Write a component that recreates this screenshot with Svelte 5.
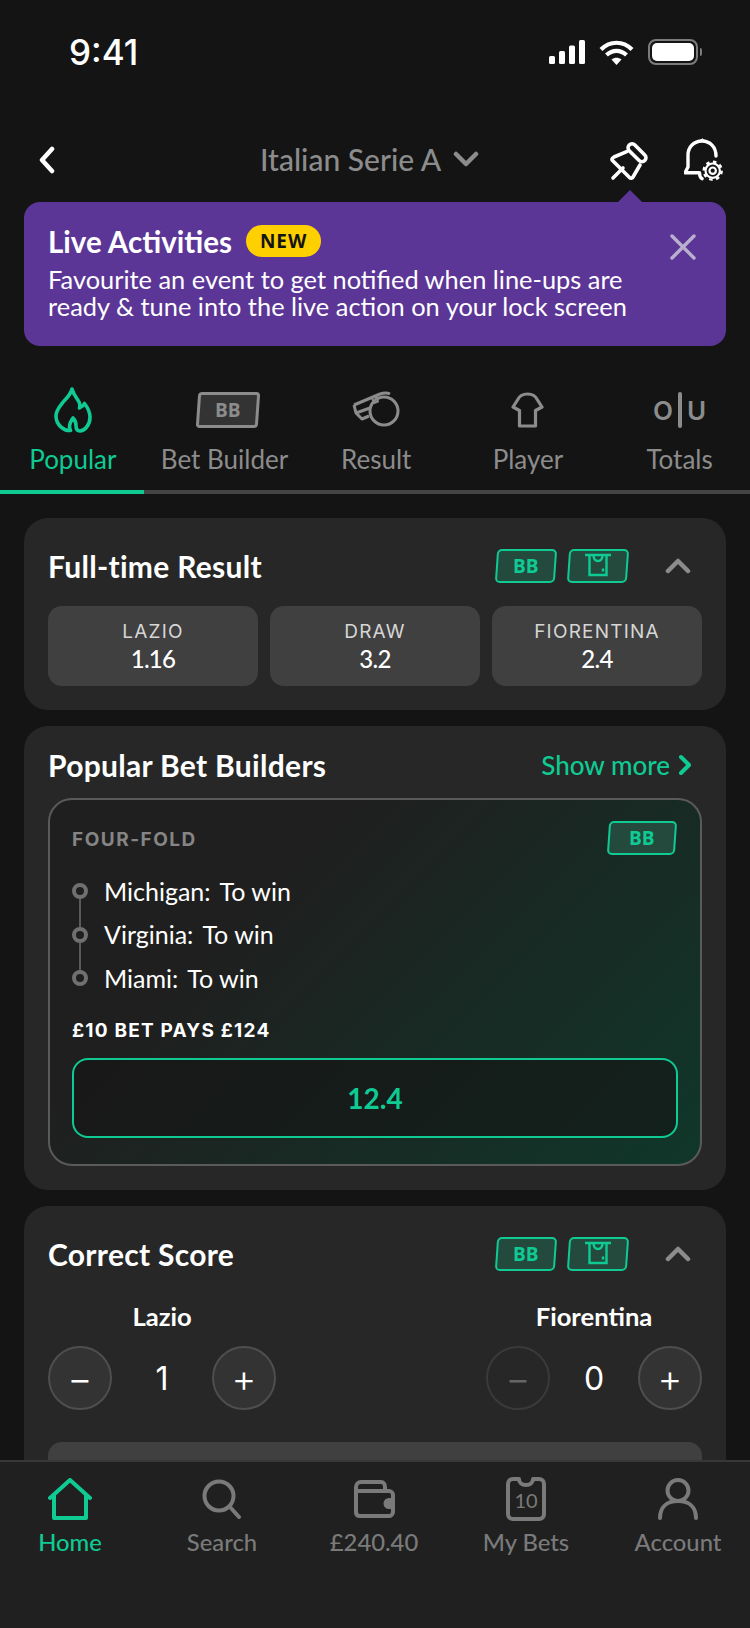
<script>
  const tabs = [
    { id: "popular", label: "Popular", active: true },
    { id: "bb", label: "Bet Builder" },
    { id: "result", label: "Result" },
    { id: "player", label: "Player" },
    { id: "totals", label: "Totals" },
  ];
  const odds = [
    { name: "LAZIO", price: "1.16" },
    { name: "DRAW", price: "3.2" },
    { name: "FIORENTINA", price: "2.4" },
  ];
  const legs = [
    { team: "Michigan:", pick: "To win" },
    { team: "Virginia:", pick: "To win" },
    { team: "Miami:", pick: "To win" },
  ];
  const nav = [
    { id: "home", label: "Home", active: true },
    { id: "search", label: "Search" },
    { id: "wallet", label: "£240.40" },
    { id: "bets", label: "My Bets" },
    { id: "account", label: "Account" },
  ];
</script>

{#snippet badges()}
  <div class="badges">
    <span class="badge"><span class="upright">BB</span></span>
    <span class="badge">
      <svg class="upright" width="28" height="26" viewBox="0 0 28 26" fill="none" stroke="#0fcb93" stroke-width="2.4">
        <path d="M1 2h26M5.5 2v20h17V2M9.5 2c0 4 1.8 6 4.5 6s4.5-2 4.5-6M19 15.5v3" />
      </svg>
    </span>
    <svg class="collapse" width="26" height="16" viewBox="0 0 26 16" fill="none" stroke="#8c8c8c" stroke-width="4.5" stroke-linecap="round" stroke-linejoin="round">
      <path d="M3 13l10-10 10 10" />
    </svg>
  </div>
{/snippet}

<div class="phone">
  <div class="status">
    <span class="time">9:41</span>
    <div class="status-icons">
      <svg width="36" height="24" viewBox="0 0 36 24" fill="#fff">
        <rect x="0" y="16" width="6" height="8" rx="1.5" />
        <rect x="10" y="11" width="6" height="13" rx="1.5" />
        <rect x="20" y="5.5" width="6" height="18.5" rx="1.5" />
        <rect x="30" y="0" width="6" height="24" rx="1.5" />
      </svg>
      <svg width="35" height="25" viewBox="0 0 35 25" fill="none" stroke="#fff" stroke-width="4.2">
        <path d="M2 9.5c9-9 22-9 31 0M7.5 15c6-5.5 14-5.5 20 0" />
        <path d="M12.5 19.5c3-2.5 7-2.5 10 0L17.5 25z" fill="#fff" stroke="none" />
      </svg>
      <div class="battery"><div class="battery-fill"></div></div>
      <div class="battery-cap"></div>
    </div>
  </div>

  <header class="topbar">
    <svg class="back" width="18" height="28" viewBox="0 0 18 28" fill="none" stroke="#fff" stroke-width="4.5" stroke-linecap="round" stroke-linejoin="round">
      <path d="M14 3L4 14l10 11" />
    </svg>
    <div class="league">
      <span>Italian Serie A</span>
      <svg width="26" height="16" viewBox="0 0 26 16" fill="none" stroke="#8c8c8c" stroke-width="4.5" stroke-linecap="round" stroke-linejoin="round">
        <path d="M3 3l10 10 10-10" />
      </svg>
    </div>
    <div class="top-actions">
      <svg width="44" height="44" viewBox="0 0 44 44" fill="none" stroke="#fff" stroke-width="3.6" stroke-linecap="round" stroke-linejoin="round">
        <rect x="16" y="10.8" width="22" height="8" rx="4" transform="rotate(45 27 14.8)" />
        <path d="M16.7 13.7L4 19c-2 1-2.5 2.5-1.5 3.5L19.5 39.5c1 1 3 .8 3.5-.5L30 27" />
        <path d="M3 40l10-10" />
      </svg>
      <svg width="40" height="44" viewBox="0 0 40 44" fill="none" stroke="#fff" stroke-width="3.4" stroke-linecap="round" stroke-linejoin="round">
        <path d="M32 18C32 9 26 3 18 3S4 9 4 17v12L1 34.7h14.5c0 3 1 5 2.5 6" />
        <path d="M18 1l-3 2.5h6z" fill="#fff" stroke-width="1" />
        <circle cx="28.7" cy="32.7" r="3.2" stroke-width="2.2" />
        <circle cx="28.7" cy="32.7" r="7.2" stroke-width="2.2" />
        <circle cx="28.7" cy="32.7" r="9" stroke-width="2.4" stroke-linecap="butt" stroke-dasharray="3.5 3.57" />
      </svg>
    </div>
  </header>

  <section class="banner">
    <div class="banner-text">
      <div class="banner-head">
        <h2>Live Activities</h2>
        <span class="new">NEW</span>
      </div>
      <p>Favourite an event to get notified when line-ups are<br />ready &amp; tune into the live action on your lock screen</p>
    </div>
    <svg class="close" width="26" height="26" viewBox="0 0 26 26" stroke="#b9afcf" stroke-width="3.4" stroke-linecap="round">
      <path d="M2 2l22 22M24 2L2 24" />
    </svg>
  </section>

  <nav class="tabs">
    {#each tabs as tab}
      <div class="tab" class:active={tab.active}>
        <div class="tab-icon">
          {#if tab.id === "popular"}
            <svg width="38" height="46" viewBox="0 0 38 46" fill="none" stroke="#0fcb93" stroke-width="3.6" stroke-linejoin="round">
              <path d="M18 2c2 7 5 9 7 13 1 2 1 4 .5 6 2-1 4-2.5 5-4.5 4 5 5.5 9.5 5.5 14 0 8-6 13.5-10 13.5-2.5 0-4-2-4-5.5 0-3-1-5.5-3-7.5-1.5 2.5-3.5 4.5-3.5 8 0 2 .5 3.5 1 4.5C10 44 2 38 2 29c0-6 4-10 8-15 4-4 7-8 8-12z" />
            </svg>
          {:else if tab.id === "bb"}
            <span class="bb-tab"><span class="upright">BB</span></span>
          {:else if tab.id === "result"}
            <svg width="48" height="38" viewBox="0 0 48 38" fill="none" stroke="#8c8c8c" stroke-width="3" stroke-linejoin="round">
              <path d="M2 14L28 3c3-1 7-1.5 10 0" />
              <path d="M2 14l2 8 6 6 7-3" />
              <path d="M4 22l14-5" />
              <path d="M20 7l2 5 4-1.5-1.5-5z" stroke-width="2" />
              <circle cx="32" cy="20" r="14" />
            </svg>
          {:else if tab.id === "player"}
            <svg width="33" height="36" viewBox="0 0 33 36" fill="none" stroke="#8c8c8c" stroke-width="3.2" stroke-linejoin="round" stroke-linecap="round">
              <path d="M16.5 2c-4 0-8 1.5-10 6L2 15l6.5 3.5V34h16V18.5L31 15l-4.5-7c-2-4.5-6-6-10-6z" />
            </svg>
          {:else}
            <div class="ou"><span>O</span><i></i><span>U</span></div>
          {/if}
        </div>
        <span class="tab-label">{tab.label}</span>
      </div>
    {/each}
  </nav>

  <main class="content">
    <section class="card">
      <div class="card-head">
        <h3>Full-time Result</h3>
        {@render badges()}
      </div>
      <div class="odds">
        {#each odds as o}
          <div class="odd">
            <span class="odd-name">{o.name}</span>
            <span class="odd-price">{o.price}</span>
          </div>
        {/each}
      </div>
    </section>

    <section class="card builders">
      <div class="builders-head">
        <h3>Popular Bet Builders</h3>
        <div class="more">
          <span>Show more</span>
          <svg width="14" height="22" viewBox="0 0 14 22" fill="none" stroke="#0fcb93" stroke-width="4" stroke-linecap="round" stroke-linejoin="round">
            <path d="M3 3l8 8-8 8" />
          </svg>
        </div>
      </div>
      <div class="builder">
        <div class="builder-top">
          <span class="fold">FOUR-FOLD</span>
          <span class="badge"><span class="upright">BB</span></span>
        </div>
        <ul class="legs">
          {#each legs as leg}
            <li><span>{leg.team}</span><span>{leg.pick}</span></li>
          {/each}
        </ul>
        <div class="pays">£10 BET PAYS £124</div>
        <div class="builder-price">12.4</div>
      </div>
    </section>

    <section class="card score">
      <div class="card-head">
        <h3>Correct Score</h3>
        {@render badges()}
      </div>
      <div class="steppers">
        <div class="team">
          <span class="team-name">Lazio</span>
          <div class="stepper">
            <span class="round">−</span>
            <span class="value wide">1</span>
            <span class="round">+</span>
          </div>
        </div>
        <div class="team">
          <span class="team-name">Fiorentina</span>
          <div class="stepper">
            <span class="round off">−</span>
            <span class="value">0</span>
            <span class="round">+</span>
          </div>
        </div>
      </div>
      <div class="score-btn"></div>
    </section>
  </main>

  <footer class="bottom">
    {#each nav as item}
      <div class="nav-item" class:active={item.active}>
        <div class="nav-icon">
          {#if item.id === "home"}
            <svg width="46" height="42" viewBox="0 0 46 42" fill="none" stroke="#0fcb93" stroke-width="4" stroke-linecap="round" stroke-linejoin="round">
              <path d="M3 20L23 2l20 18M7 17v23h32V17" />
            </svg>
          {:else if item.id === "search"}
            <svg width="40" height="40" viewBox="0 0 40 40" fill="none" stroke="#7a7a7a" stroke-width="4" stroke-linecap="round">
              <circle cx="17" cy="17" r="14.5" />
              <path d="M28 28l9 10" />
            </svg>
          {:else if item.id === "wallet"}
            <svg width="42" height="38" viewBox="0 0 42 38" fill="none" stroke="#7a7a7a" stroke-width="4" stroke-linejoin="round">
              <path d="M3 12V7c0-2.5 2-5 5-5h20c2.5 0 4 2 4 5v4" />
              <path d="M3 11h33c2 0 4 2 4 4v17c0 2-2 4-4 4H7c-3 0-4-2-4-4z" />
              <path d="M40 20h-4c-2 0-3.5 1.5-3.5 3.5S34 27 36 27h4z" fill="#7a7a7a" />
            </svg>
          {:else if item.id === "bets"}
            <svg width="40" height="44" viewBox="0 0 40 44" fill="none" stroke="#7a7a7a" stroke-width="4" stroke-linejoin="round">
              <path d="M13 2c0 4 3 6 7 6s7-2 7-6h6c3 0 5 2 5 5v30c0 3-2 5-5 5H7c-3 0-5-2-5-5V7c0-3 2-5 5-5z" />
              <text x="20" y="31" text-anchor="middle" fill="#7a7a7a" stroke="none" font-size="20" font-family="Lato, sans-serif">10</text>
            </svg>
          {:else}
            <svg width="42" height="42" viewBox="0 0 42 42" fill="none" stroke="#7a7a7a" stroke-width="4" stroke-linecap="round">
              <ellipse cx="21" cy="12.5" rx="10.5" ry="10.5" />
              <path d="M3 40c0-11 7-17 18-17s18 6 18 17" />
            </svg>
          {/if}
        </div>
        <span class="nav-label">{item.label}</span>
      </div>
    {/each}
  </footer>
</div>

<style>
  :global(body) {
    margin: 0;
    background: #141414;
  }

  .phone {
    width: 750px;
    height: 1628px;
    display: flex;
    flex-direction: column;
    overflow: hidden;
    background: #141414;
    color: #fff;
    font-family: Lato, "Open Sans", sans-serif;
  }

  h2, h3, p {
    margin: 0;
  }

  .status {
    height: 130px;
    flex-shrink: 0;
    box-sizing: border-box;
    padding: 32px 48px 0 69px;
    display: flex;
    justify-content: space-between;
    align-items: flex-start;
  }

  .time {
    font-family: Inter, sans-serif;
    font-size: 35px;
    font-weight: 500;
    line-height: 40px;
  }

  .status-icons {
    display: flex;
    align-items: center;
    height: 40px;
  }

  .status-icons svg {
    margin-right: 14px;
  }

  .battery {
    width: 50px;
    height: 26px;
    box-sizing: border-box;
    border: 2px solid #7c7c7c;
    border-radius: 8px;
    padding: 2px;
  }

  .battery-fill {
    height: 100%;
    background: #fff;
    border-radius: 5px;
  }

  .battery-cap {
    width: 2px;
    height: 8px;
    background: #7c7c7c;
    margin-left: 2px;
    border-radius: 0 2px 2px 0;
  }

  .topbar {
    height: 60px;
    flex-shrink: 0;
    box-sizing: border-box;
    padding: 0 26px 0 38px;
    display: flex;
    align-items: center;
    justify-content: space-between;
    position: relative;
  }

  .league {
    position: absolute;
    left: 260px;
    top: 11px;
    display: flex;
    align-items: center;
    gap: 12px;
    color: #8c8c8c;
    font-size: 30px;
    font-weight: 500;
  }

  .top-actions {
    display: flex;
    align-items: center;
    gap: 30px;
  }

  .banner {
    margin: 12px 24px 0;
    height: 144px;
    flex-shrink: 0;
    box-sizing: border-box;
    padding: 24px 30px 0 24px;
    background: #5c3696;
    border-radius: 16px;
    display: flex;
    justify-content: space-between;
    position: relative;
  }

  .banner::before {
    content: "";
    position: absolute;
    top: -12px;
    right: 84px;
    border-left: 12px solid transparent;
    border-right: 12px solid transparent;
    border-bottom: 12px solid #5c3696;
  }

  .banner-head {
    display: flex;
    align-items: center;
    gap: 14px;
    height: 30px;
  }

  .banner h2 {
    font-size: 29.5px;
    font-weight: 700;
  }

  .new {
    background: #ffd000;
    color: #141414;
    font-family: "Open Sans", sans-serif;
    font-size: 19px;
    font-weight: 700;
    letter-spacing: 1px;
    height: 32px;
    line-height: 32px;
    padding: 0 14px;
    border-radius: 16px;
  }

  .banner p {
    margin-top: 10px;
    font-size: 25.4px;
    line-height: 27px;
  }

  .close {
    margin-top: 8px;
  }

  .tabs {
    margin: 38px 0 0 -3px;
    width: 753px;
    flex-shrink: 0;
    display: grid;
    grid-template-columns: repeat(5, 151.7px);
    position: relative;
  }

  .tab {
    display: flex;
    flex-direction: column;
    align-items: center;
    height: 110px;
    color: #8c8c8c;
  }

  .tab.active {
    color: #0fcb93;
  }

  .tab-icon {
    height: 48px;
    padding-top: 2px;
    display: flex;
    align-items: center;
    justify-content: center;
  }

  .tab-label {
    margin-top: 10px;
    font-size: 26px;
    line-height: 30px;
  }

  .upright {
    display: block;
    transform: skewX(4deg);
  }

  .bb-tab {
    width: 56px;
    height: 30px;
    margin-left: 6px;
    border: 3px solid #8c8c8c;
    border-radius: 4px;
    background: #333;
    transform: skewX(-4deg);
    display: flex;
    align-items: center;
    justify-content: center;
    font-family: "Open Sans", sans-serif;
    font-size: 19px;
    font-weight: 700;
  }

  .ou {
    display: flex;
    align-items: center;
    gap: 5px;
    font-family: Inter, sans-serif;
    font-size: 26px;
    font-weight: 600;
  }

  .ou i {
    width: 4px;
    height: 36px;
    background: #8c8c8c;
    border-radius: 2px;
  }

  .tabs::after {
    content: "";
    position: absolute;
    left: 3px;
    right: 0;
    bottom: 0;
    height: 4px;
    background: linear-gradient(to right, #0fcb93 144px, #444 144px);
  }

  .content {
    flex: 1;
    min-height: 0;
    overflow: hidden;
    padding: 24px 24px 0;
    display: flex;
    flex-direction: column;
    gap: 16px;
  }

  .card {
    flex-shrink: 0;
    background: #272727;
    border-radius: 24px;
    padding: 0 24px 24px;
  }

  .card h3 {
    font-size: 30px;
    font-weight: 700;
    letter-spacing: 0.3px;
  }

  .card-head {
    height: 88px;
    box-sizing: border-box;
    padding-top: 8px;
    display: flex;
    align-items: center;
    justify-content: space-between;
  }

  .badges {
    display: flex;
    align-items: center;
    gap: 12px;
  }

  .badge {
    width: 60px;
    height: 34px;
    box-sizing: border-box;
    border: 2px solid #0fcb93;
    border-radius: 5px;
    background: #234a3d;
    color: #0fcb93;
    transform: skewX(-4deg);
    display: flex;
    align-items: center;
    justify-content: center;
    font-family: "Open Sans", sans-serif;
    font-size: 19px;
    font-weight: 700;
  }

  .collapse {
    margin: 0 11px 0 25px;
  }

  .odds {
    display: grid;
    grid-template-columns: repeat(3, 1fr);
    gap: 12px;
  }

  .odd {
    height: 80px;
    background: #404040;
    border-radius: 14px;
    display: flex;
    flex-direction: column;
    align-items: center;
    justify-content: center;
  }

  .odd-name {
    font-family: Inter, sans-serif;
    font-size: 19px;
    letter-spacing: 1.2px;
    color: #d6d6d6;
    line-height: 26px;
  }

  .odd-price {
    font-size: 24px;
    font-weight: 500;
    letter-spacing: -0.7px;
    line-height: 28px;
  }

  .builders-head {
    height: 72px;
    box-sizing: border-box;
    padding: 6px 10px 0 0;
    display: flex;
    align-items: center;
    justify-content: space-between;
  }

  .more {
    display: flex;
    align-items: center;
    gap: 8px;
    color: #0fcb93;
    font-size: 26px;
    font-weight: 500;
  }

  .builder {
    height: 368px;
    box-sizing: border-box;
    border: 2px solid #5a5a5a;
    border-radius: 24px;
    padding: 21px 22px 0;
    background: linear-gradient(135deg, #1f1f1f 30%, #10372a 100%);
  }

  .builder-top {
    height: 34px;
    display: flex;
    align-items: center;
    justify-content: space-between;
  }

  .builder-top .badge {
    width: 68px;
    margin-right: 2px;
  }

  .fold {
    font-family: Inter, sans-serif;
    font-size: 19px;
    font-weight: 700;
    letter-spacing: 1.5px;
    color: #858585;
    padding-top: 2px;
  }

  .legs {
    list-style: none;
    margin: 14px 0 0;
    padding: 0;
  }

  .legs li {
    height: 43.6px;
    display: flex;
    align-items: center;
    gap: 9px;
    padding-left: 32px;
    position: relative;
    font-size: 25px;
  }

  .legs li::before {
    content: "";
    position: absolute;
    left: 0;
    top: 14px;
    width: 8px;
    height: 8px;
    border: 4px solid #707070;
    border-radius: 50%;
  }

  .legs li:not(:last-child)::after {
    content: "";
    position: absolute;
    left: 7px;
    top: 30px;
    width: 2px;
    height: 28px;
    background: #5a5a5a;
  }

  .pays {
    margin-top: 20px;
    font-family: Inter, sans-serif;
    font-size: 19px;
    line-height: 22px;
    font-weight: 700;
    letter-spacing: 1.2px;
  }

  .builder-price {
    margin-top: 16px;
    height: 80px;
    box-sizing: border-box;
    border: 2px solid #0fcb93;
    border-radius: 16px;
    background: rgba(20, 20, 20, 0.6);
    color: #0fcb93;
    font-size: 28px;
    font-weight: 700;
    display: flex;
    align-items: center;
    justify-content: center;
  }

  .score {
    padding-bottom: 0;
  }

  .steppers {
    display: flex;
    justify-content: space-between;
  }

  .team {
    display: flex;
    flex-direction: column;
    align-items: center;
  }

  .team-name {
    font-size: 25.6px;
    font-weight: 700;
    line-height: 44px;
  }

  .stepper {
    margin-top: 8px;
    display: flex;
    align-items: center;
  }

  .round {
    width: 64px;
    height: 64px;
    box-sizing: border-box;
    border: 2px solid #4e4e4e;
    border-radius: 50%;
    background: #333;
    display: flex;
    align-items: center;
    justify-content: center;
    font-family: Inter, sans-serif;
    font-size: 38px;
    font-weight: 300;
    line-height: 1;
  }

  .round.off {
    background: transparent;
    border-color: #3a3a3a;
    color: #666;
  }

  .value {
    width: 88px;
    text-align: center;
    font-family: Inter, sans-serif;
    font-size: 32px;
  }

  .value.wide {
    width: 100px;
  }

  .score-btn {
    margin-top: 32px;
    height: 80px;
    background: #404040;
    border-radius: 14px;
  }

  .bottom {
    height: 168px;
    flex-shrink: 0;
    box-sizing: border-box;
    border-top: 2px solid #383838;
    background: #202020;
    padding: 15px 0 0 0;
    margin-left: -6px;
    display: grid;
    grid-template-columns: repeat(5, 152px);
  }

  .nav-item {
    display: flex;
    flex-direction: column;
    align-items: center;
    color: #7a7a7a;
  }

  .nav-item.active {
    color: #0fcb93;
  }

  .nav-icon {
    height: 44px;
    display: flex;
    align-items: center;
    justify-content: center;
  }

  .nav-label {
    margin-top: 6px;
    font-size: 23.8px;
    font-weight: 500;
    line-height: 30px;
  }
</style>
